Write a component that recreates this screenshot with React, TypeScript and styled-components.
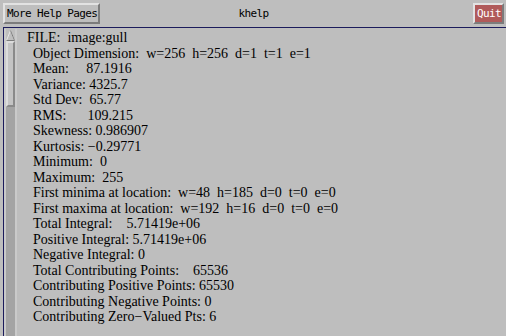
import React from "react";
import styled, { createGlobalStyle } from "styled-components";

const GlobalStyle = createGlobalStyle`
  html, body {
    margin: 0;
    padding: 0;
    background: #bebebe;
  }
`;

const Window = styled.div`
  width: 506px;
  height: 336px;
  display: flex;
  flex-direction: column;
  background: #bebebe;
  overflow: hidden;
`;

const TopBar = styled.div`
  height: 27px;
  display: grid;
  grid-template-columns: 1fr auto 1fr;
  align-items: center;
  padding: 0 2px 0 3px;
  box-sizing: border-box;
`;

const CmdButton = styled.div<{ $danger?: boolean; $end?: boolean }>`
  justify-self: ${(p) => (p.$end ? "end" : "start")};
  height: 21px;
  box-sizing: border-box;
  padding: 0 1px 0 2px;
  display: flex;
  align-items: center;
  font-family: "DejaVu Sans Mono", "Liberation Mono", monospace;
  font-size: 11px;
  letter-spacing: -0.6px;
  color: ${(p) => (p.$danger ? "#ffffff" : "#000000")};
  background: ${(p) => (p.$danger ? "#b05a5a" : "#bebebe")};
  border: 2px solid;
  border-color: #e2e2e2 #7c7c7c #7c7c7c #e2e2e2;
`;

const Title = styled.div`
  font-family: "DejaVu Sans Mono", "Liberation Mono", monospace;
  font-size: 11px;
  letter-spacing: -0.6px;
  color: #000;
`;

const Panel = styled.div`
  flex: 1;
  display: flex;
  margin-left: 3px;
  border-top: 1px solid #1c1c5c;
  border-left: 1px solid #1c1c5c;
  min-height: 0;
`;

const ScrollBar = styled.div`
  width: 9px;
  display: flex;
  flex-direction: column;
  background: #a4a4a4;
  border-left: 2px solid #cacaca;
  border-right: 2px solid #cacaca;
  margin-top: 1px;
`;

const Arrow = styled.div`
  height: 12px;
  display: flex;
  align-items: center;
  justify-content: center;
  background: #bebebe;
`;

const Thumb = styled.div`
  height: 66px;
  box-sizing: border-box;
  background: #c4c4c4;
  border: 2px solid;
  border-color: #dcdcdc #8a8a8a #8a8a8a #dcdcdc;
`;

const TextArea = styled.pre`
  margin: 0;
  padding: 2px 0 0 10px;
  font-family: "Liberation Serif", "Times New Roman", serif;
  font-size: 14px;
  line-height: 15.5px;
  color: #000;
  white-space: pre;
`;

const Line = styled.div<{ $indent?: boolean }>`
  padding-left: ${(p) => (p.$indent ? "6px" : "0")};
`;

const lines: string[] = [
  "Object Dimension:  w=256  h=256  d=1  t=1  e=1",
  "Mean:     87.1916",
  "Variance: 4325.7",
  "Std Dev:  65.77",
  "RMS:      109.215",
  "Skewness: 0.986907",
  "Kurtosis: \u22120.29771",
  "Minimum:  0",
  "Maximum:  255",
  "First minima at location:  w=48  h=185  d=0  t=0  e=0",
  "First maxima at location:  w=192  h=16  d=0  t=0  e=0",
  "Total Integral:    5.71419e+06",
  "Positive Integral: 5.71419e+06",
  "Negative Integral: 0",
  "Total Contributing Points:    65536",
  "Contributing Positive Points: 65530",
  "Contributing Negative Points: 0",
  "Contributing Zero\u2212Valued Pts: 6",
];

const App: React.FC = () => {
  return (
    <Window>
      <GlobalStyle />
      <TopBar>
        <CmdButton>More Help Pages</CmdButton>
        <Title>khelp</Title>
        <CmdButton $danger $end>
          Quit
        </CmdButton>
      </TopBar>
      <Panel>
        <ScrollBar>
          <Arrow>
            <svg width="9" height="11" viewBox="0 0 9 11">
              <polygon points="4.5,0.5 8.5,10.5 0.5,10.5" fill="#bebebe" stroke="#e6e6e6" strokeWidth="1" />
              <line x1="0.5" y1="10.5" x2="8.5" y2="10.5" stroke="#7c7c7c" />
              <line x1="4.5" y1="0.5" x2="8.5" y2="10.5" stroke="#7c7c7c" />
            </svg>
          </Arrow>
          <Thumb />
        </ScrollBar>
        <TextArea>
          <Line>FILE:  image:gull</Line>
          {lines.map((l) => (
            <Line $indent key={l}>
              {l}
            </Line>
          ))}
        </TextArea>
      </Panel>
    </Window>
  );
};

export default App;
